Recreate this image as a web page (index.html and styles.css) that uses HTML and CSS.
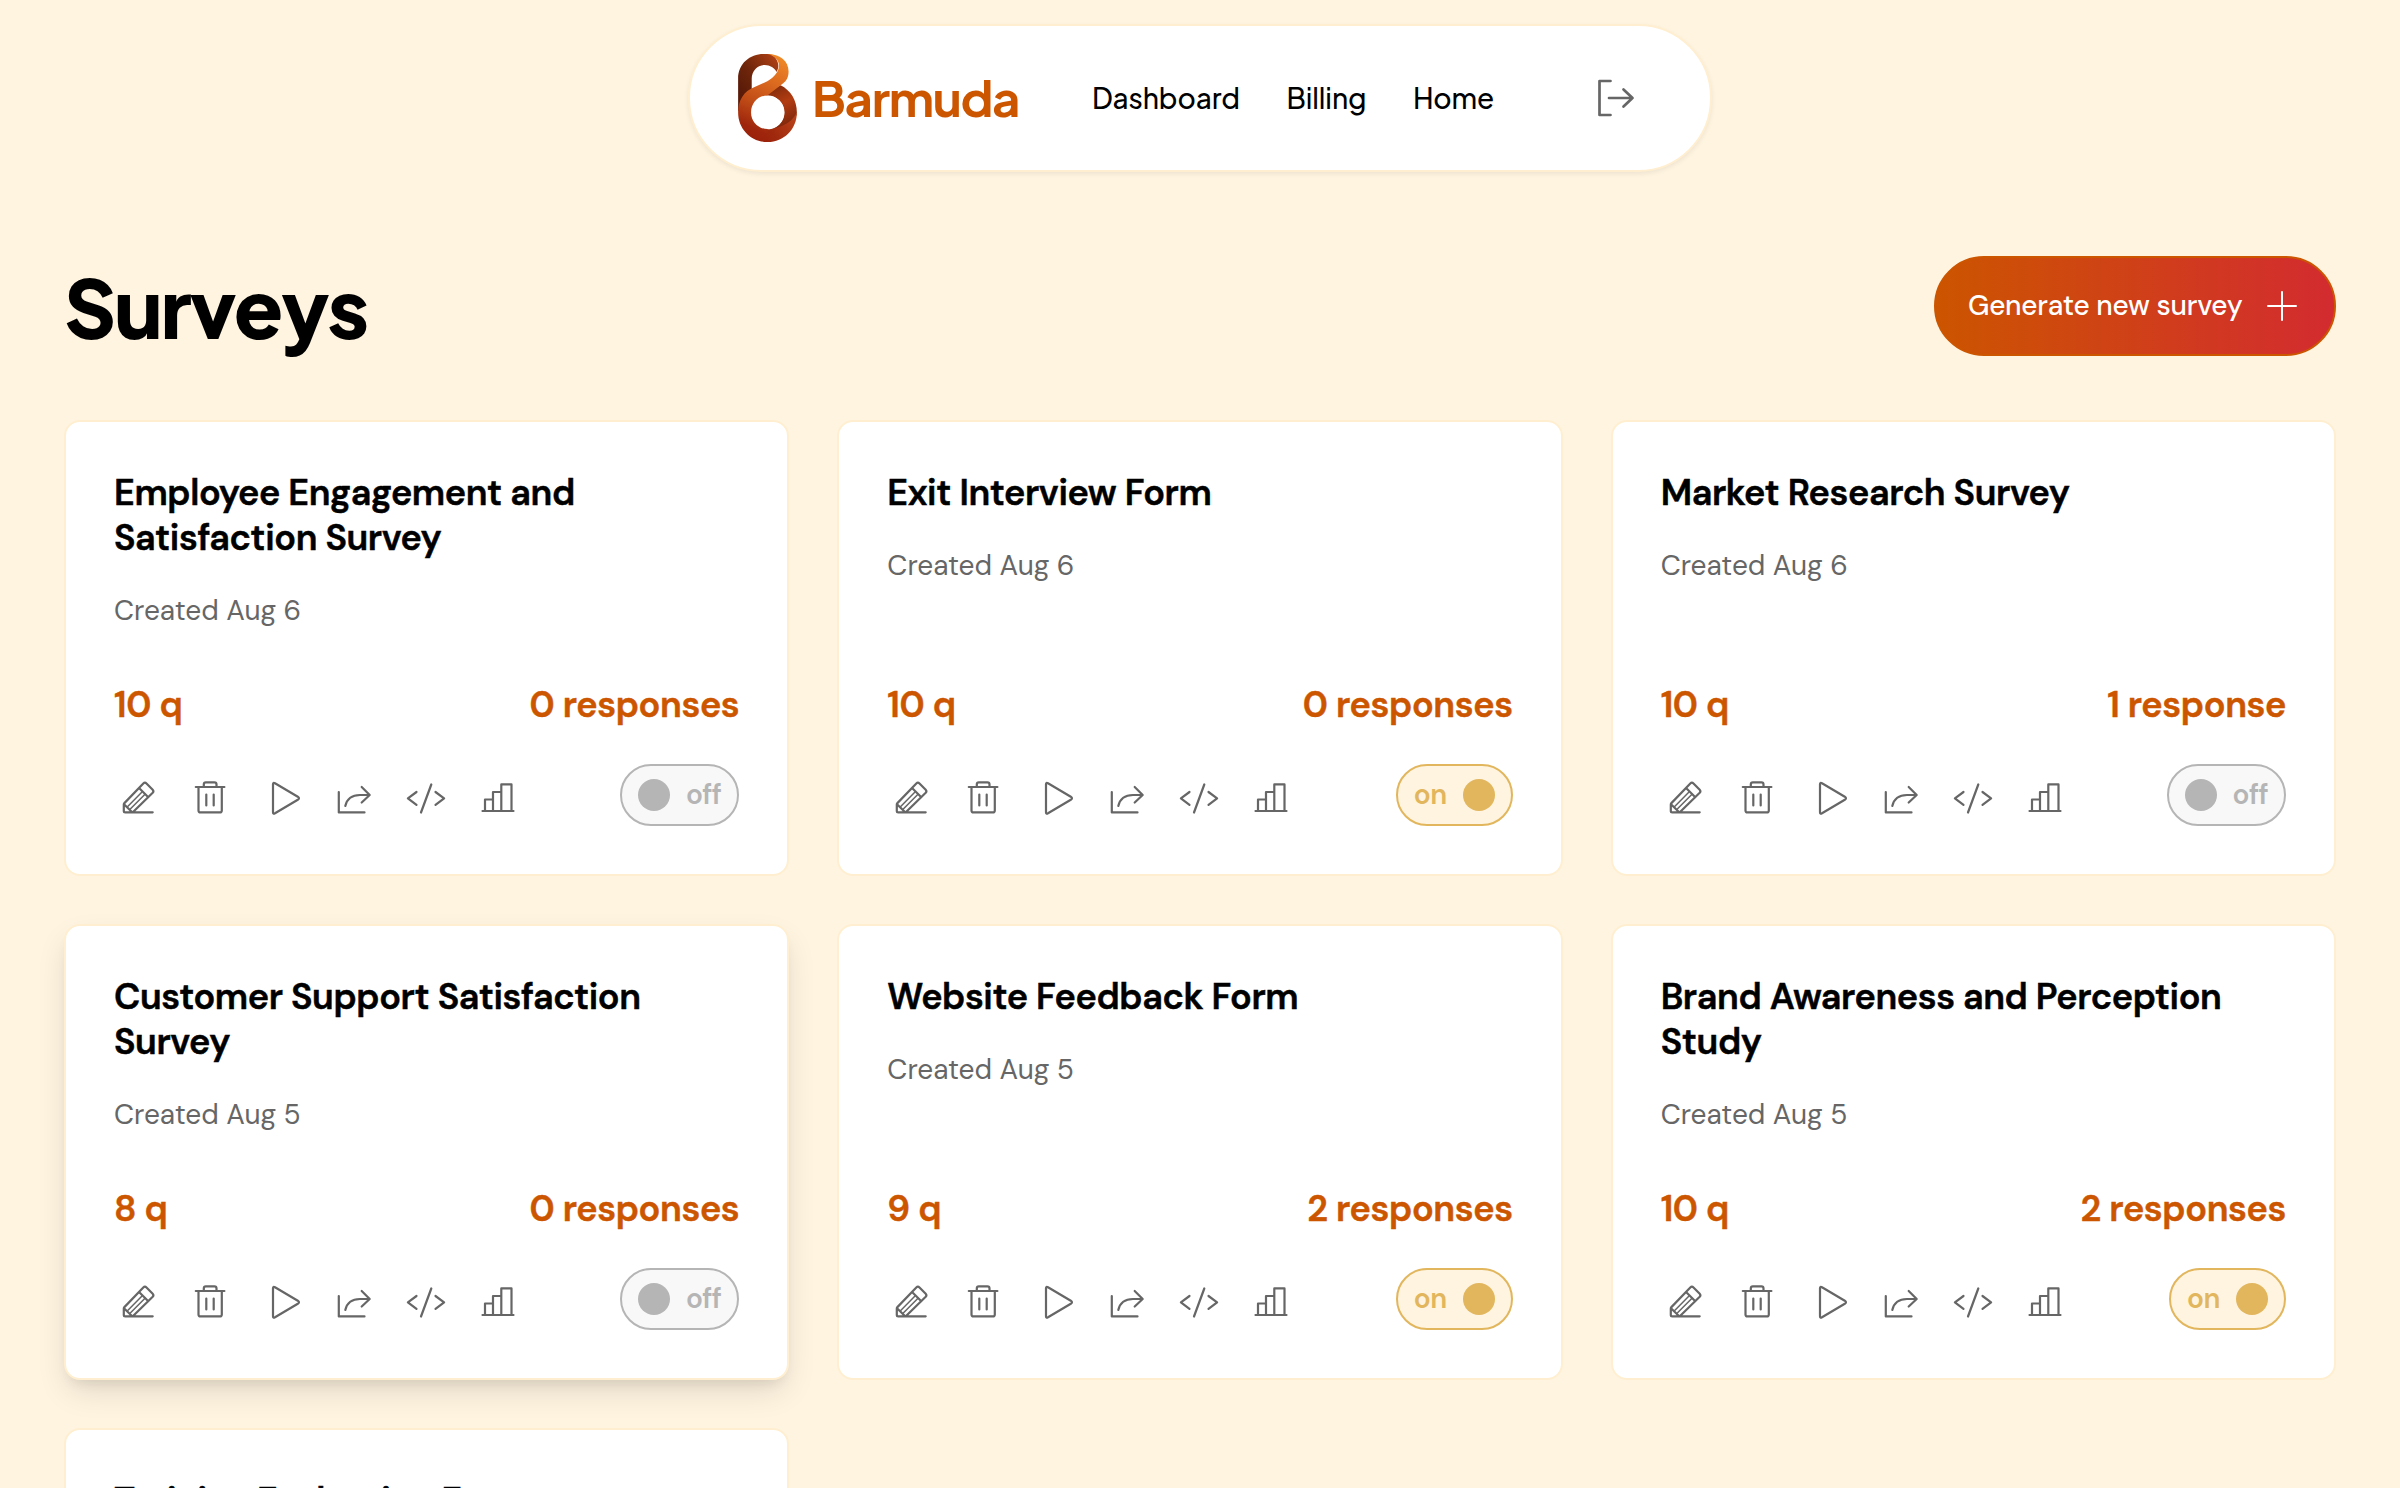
FILE: index.html
```html
<!DOCTYPE html>
<html lang="en">
<head>
<meta charset="utf-8">
<title>Barmuda – Surveys</title>
<link rel="stylesheet" href="styles.css">
</head>
<body>
<svg class="sprite" aria-hidden="true">
  <symbol id="i-edit" viewBox="0 0 40 40"><path d="M34.7 34.3H7.2q-1.4 0-1.4-1.4v-6.4q0-.8.6-1.4L25.3 5.5q1.6-1.6 3.2 0l6.2 6.3q1.4 1.5 0 3L15.3 33.8M6 26.3l8.2 8M21.3 10.3l9 9"/><path stroke-width="1.5" d="M9.7 28.5 24 14M12.3 31 27 16.3"/></symbol>
  <symbol id="i-trash" viewBox="0 0 40 40"><path d="M5.8 9h28.6M13.8 9V6.4q0-2 2-2h8.7q2 0 2 2V9M8.5 9v23.4q0 2 2 2h19.3q2 0 2-2V9M16.3 16.6v10.8M23.7 16.6v10.8"/></symbol>
  <symbol id="i-play" viewBox="0 0 40 40"><path d="M11 6.3q0-2.2 2-1.1l22.8 13.5q2.4 1.6 0 3.1L13 35.3q-2 1.1-2-1.1z"/></symbol>
  <symbol id="i-share" viewBox="0 0 40 40"><path d="M4.8 14v20.4h25.7M11.3 28C13 20.5 18.5 17 26 17h9.6M27.7 9l8 8-8 7.5"/></symbol>
  <symbol id="i-code" viewBox="0 0 40 40"><path d="m10.5 14-8.6 6.3 8.6 6.5M25.3 6.5 15 34.5M29.5 14l8.6 6.3-8.6 6.5"/></symbol>
  <symbol id="i-chart" viewBox="0 0 40 40"><path d="M4.5 33h31M7 33V21.5h8M15 33V14h8.3M23.3 33V6.4h10.2V33"/></symbol>
</svg>

<header class="navbar">
  <a class="brand">
    <svg class="brand-mark" viewBox="174 131 177 265">
      <defs>
        <linearGradient id="g-stem" gradientUnits="userSpaceOnUse" x1="180" y1="240" x2="300" y2="150"><stop offset="0" stop-color="#5a1b08"/><stop offset=".4" stop-color="#6f260b"/><stop offset="1" stop-color="#b04115"/></linearGradient>
        <linearGradient id="g-band" gradientUnits="userSpaceOnUse" x1="310" y1="140" x2="200" y2="390"><stop offset="0" stop-color="#f08a26"/><stop offset=".3" stop-color="#dc6a1f"/><stop offset=".58" stop-color="#c14d17"/><stop offset=".85" stop-color="#9f260c"/><stop offset="1" stop-color="#9a1f0a"/></linearGradient>
        <linearGradient id="g-fold" gradientUnits="userSpaceOnUse" x1="270" y1="225" x2="335" y2="355"><stop offset="0" stop-color="#7a2a0c"/><stop offset=".45" stop-color="#b23c12"/><stop offset="1" stop-color="#74230b"/></linearGradient>
        <linearGradient id="g-base" gradientUnits="userSpaceOnUse" x1="350" y1="320" x2="230" y2="390"><stop offset="0" stop-color="#b8431a"/><stop offset=".6" stop-color="#a02a0d"/><stop offset="1" stop-color="#9a1f0a"/></linearGradient>
      </defs>
      <path fill="url(#g-stem)" d="M174 305V205C174 160 210 131 250 131H270C292 140 302 165 290 185C284 173 270 164 254 164C232 164 215 182 215 205V240Z"/>
      <path fill="url(#g-fold)" d="M302 225C332 240 351 270 351 307C348 340 310 362 262 362V357C291 357 313 335 313 307C313 279 291 256 263 256L245 252Z"/>
      <path fill="url(#g-base)" d="M351 307C351 357 312 396 263 396H250L255 357C290 357 332 345 351 307Z"/>
      <path fill="#fff" d="M263 256.500a50.500 50.500 0 1 0 .1 0z"/>
      <path fill="url(#g-band)" d="M262 131C300 131 326 152 326 184C326 205 316 217 302 225L262 256C234 256 213 279 213 307C213 335 235 357 263 357L262 396C213 396 174 357 174 307C174 270 192 242 222 231L262 213C285 200 297 183 297 165C297 150 284 136 262 131Z"/>
    </svg>
    <span class="brand-name">Barmuda</span>
  </a>
  <nav class="menu"><a>Dashboard</a><a>Billing</a><a>Home</a></nav>
  <a class="logout" aria-label="Log out"><svg viewBox="0 0 42 42"><path d="M14.500 4H3.500v34h11M13 21h23.500M27.500 12.500l9 8.500-9 8.500"/></svg></a>
</header>

<main class="page">
  <div class="page-head">
    <h1>Surveys</h1>
    <a class="generate"><span>Generate new survey</span><svg viewBox="0 0 32 32"><path d="M16 2v28M2 16h28"/></svg></a>
  </div>

  <section class="grid">
    <article class="card">
      <h2>Employee Engagement and Satisfaction Survey</h2>
      <p class="created">Created Aug 6</p>
      <div class="stats"><span>10 q</span><span>0 responses</span></div>
      <div class="actions">
        <svg><use href="#i-edit"/></svg><svg><use href="#i-trash"/></svg><svg><use href="#i-play"/></svg><svg><use href="#i-share"/></svg><svg><use href="#i-code"/></svg><svg><use href="#i-chart"/></svg>
        <div class="toggle off"><i></i><span>off</span></div>
      </div>
    </article>
    <article class="card">
      <h2>Exit Interview Form</h2>
      <p class="created">Created Aug 6</p>
      <div class="stats"><span>10 q</span><span>0 responses</span></div>
      <div class="actions">
        <svg><use href="#i-edit"/></svg><svg><use href="#i-trash"/></svg><svg><use href="#i-play"/></svg><svg><use href="#i-share"/></svg><svg><use href="#i-code"/></svg><svg><use href="#i-chart"/></svg>
        <div class="toggle on"><span>on</span><i></i></div>
      </div>
    </article>
    <article class="card">
      <h2>Market Research Survey</h2>
      <p class="created">Created Aug 6</p>
      <div class="stats"><span>10 q</span><span>1 response</span></div>
      <div class="actions">
        <svg><use href="#i-edit"/></svg><svg><use href="#i-trash"/></svg><svg><use href="#i-play"/></svg><svg><use href="#i-share"/></svg><svg><use href="#i-code"/></svg><svg><use href="#i-chart"/></svg>
        <div class="toggle off"><i></i><span>off</span></div>
      </div>
    </article>
    <article class="card raised">
      <h2>Customer Support Satisfaction Survey</h2>
      <p class="created">Created Aug 5</p>
      <div class="stats"><span>8 q</span><span>0 responses</span></div>
      <div class="actions">
        <svg><use href="#i-edit"/></svg><svg><use href="#i-trash"/></svg><svg><use href="#i-play"/></svg><svg><use href="#i-share"/></svg><svg><use href="#i-code"/></svg><svg><use href="#i-chart"/></svg>
        <div class="toggle off"><i></i><span>off</span></div>
      </div>
    </article>
    <article class="card">
      <h2>Website Feedback Form</h2>
      <p class="created">Created Aug 5</p>
      <div class="stats"><span>9 q</span><span>2 responses</span></div>
      <div class="actions">
        <svg><use href="#i-edit"/></svg><svg><use href="#i-trash"/></svg><svg><use href="#i-play"/></svg><svg><use href="#i-share"/></svg><svg><use href="#i-code"/></svg><svg><use href="#i-chart"/></svg>
        <div class="toggle on"><span>on</span><i></i></div>
      </div>
    </article>
    <article class="card">
      <h2>Brand Awareness and Perception Study</h2>
      <p class="created">Created Aug 5</p>
      <div class="stats"><span>10 q</span><span>2 responses</span></div>
      <div class="actions">
        <svg><use href="#i-edit"/></svg><svg><use href="#i-trash"/></svg><svg><use href="#i-play"/></svg><svg><use href="#i-share"/></svg><svg><use href="#i-code"/></svg><svg><use href="#i-chart"/></svg>
        <div class="toggle on"><span>on</span><i></i></div>
      </div>
    </article>
    <article class="card">
      <h2>Training Evaluation Form</h2>
    </article>
  </section>
</main>
</body>
</html>
```
FILE: styles.css
```css
* { box-sizing: border-box; margin: 0; padding: 0; }

html { height: 100%; overflow: hidden; }

body {
  height: 1488px;
  overflow: hidden;
  padding-top: 24px;
  background: #fff4e0;
  color: #000;
  font-family: "DM Sans", Inter, "Liberation Sans", sans-serif;
  font-size: 28px;
  line-height: 1.25;
}

svg { fill: none; stroke-linecap: round; stroke-linejoin: round; }

.sprite { display: none; }

/* Navigation pill */
.navbar {
  display: flex;
  align-items: center;
  width: 1024px;
  height: 148px;
  margin: 0 auto;
  padding: 0 72px 0 48px;
  background: #fff;
  border: 2px solid #ffefd0;
  border-radius: 74px;
  box-shadow: 0 2px 5px rgba(0, 0, 0, .07);
  font-family: "Plus Jakarta Sans", Inter, sans-serif;
}

.brand { display: flex; align-items: center; gap: 15px; }
.brand-mark { width: 59px; height: 88px; }
.brand-name {
  width: 206px;
  padding-bottom: 1px;
  color: #c50;
  font-size: 49px;
  font-weight: 700;
  letter-spacing: -1.3px;
}

.menu { display: flex; gap: 46.5px; margin-left: 74px; padding-bottom: 1px; font-weight: 500; letter-spacing: -.1px; }

.logout { display: flex; margin-left: auto; }
.logout svg { width: 42px; height: 42px; stroke: #666; stroke-width: 2.7; }

/* Page heading */
.page { padding: 84px 64px 0; }

.page-head {
  display: flex;
  align-items: center;
  justify-content: space-between;
  height: 100px;
  margin-bottom: 64px;
}

h1 {
  font-family: "Plus Jakarta Sans", Inter, sans-serif;
  font-size: 81px;
  font-weight: 800;
  line-height: 100px;
  letter-spacing: -2.2px;
}

.generate {
  display: flex;
  align-items: center;
  justify-content: space-between;
  width: 402px;
  height: 100px;
  padding: 0 36px 0 32px;
  border: 2px solid #c50;
  border-radius: 50px;
  background: linear-gradient(to right, #c50, #d32b30);
  color: #fff;
  font-weight: 500;
  letter-spacing: -.25px;
}
.generate span { padding-bottom: 2px; }
.generate svg { width: 32px; height: 32px; stroke: #fff; stroke-width: 2; }

/* Survey cards */
.grid {
  display: grid;
  grid-template-columns: repeat(3, 1fr);
  grid-auto-rows: 456px;
  gap: 48px;
}

.card {
  display: flex;
  flex-direction: column;
  padding: 48px;
  background: #fff;
  border: 2px solid #ffefd0;
  border-radius: 16px;
}
.card.raised {
  box-shadow: 0 8px 14px -6px rgba(0, 0, 0, .09), 0 14px 32px -4px rgba(0, 0, 0, .12);
}

h2 {
  margin-bottom: 33px;
  font-size: 36px;
  font-weight: 600;
  line-height: 45px;
  letter-spacing: -.39px;
  -webkit-text-stroke: .5px;
}

.created { color: #666; }

.stats {
  display: flex;
  justify-content: space-between;
  margin-top: auto;
  margin-bottom: 37px;
  color: #c50;
  font-size: 36px;
  font-weight: 600;
  line-height: 45px;
  letter-spacing: -.35px;
  -webkit-text-stroke: .5px;
}

.actions {
  display: flex;
  align-items: center;
  gap: 32px;
  height: 62px;
  padding-left: 4px;
}
.actions svg {
  width: 40px;
  height: 40px;
  margin-top: 6px;
  stroke: #666;
  stroke-width: 2.2;
}

.toggle {
  display: flex;
  align-items: center;
  justify-content: space-between;
  height: 62px;
  margin-left: auto;
  padding: 0 16px;
  border: 2px solid;
  border-radius: 31px;
  font-weight: 600;
}
.toggle i { width: 32px; height: 32px; border-radius: 50%; background: currentColor; }
.toggle span { padding-bottom: 2px; }
.toggle.off { width: 119px; background: #f8f8f8; color: #b5b5b5; letter-spacing: -.6px; }
.toggle.on { width: 117px; background: #fff4e0; color: #e2b65d; letter-spacing: -.4px; }
```
